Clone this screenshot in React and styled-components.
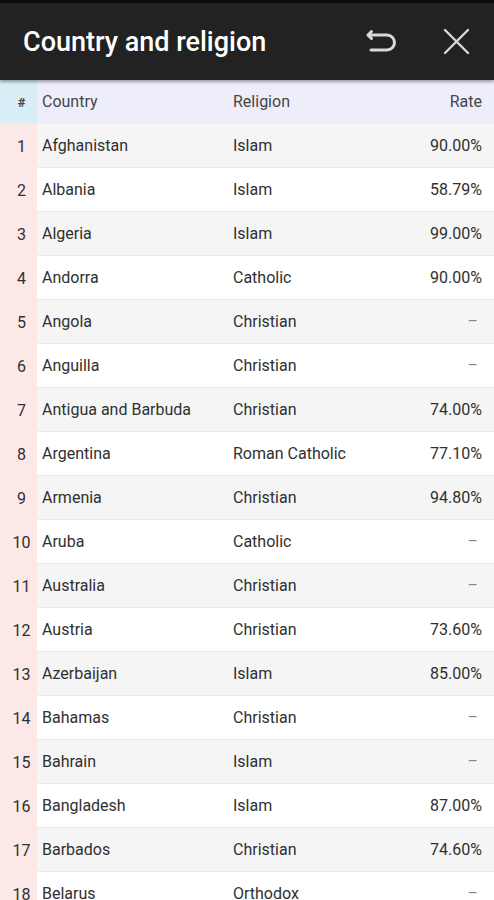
import React from "react";
import styled, { createGlobalStyle } from "styled-components";

const Global = createGlobalStyle`
  html, body { margin: 0; padding: 0; background: #ffffff; }
  body { font-family: Roboto, "Noto Sans", "Liberation Sans", sans-serif; overflow: hidden; }
  * { box-sizing: border-box; }
`;

const Page = styled.div`
  width: 494px;
  height: 900px;
  overflow: hidden;
  display: flex;
  flex-direction: column;
  background: #ffffff;
`;

const AppBar = styled.header`
  height: 80px;
  flex: none;
  background: #222222;
  border-top: 3px solid #0a0a0a;
  display: flex;
  align-items: center;
  padding: 0 14px 0 23px;
  box-shadow: 0 2px 3px rgba(0, 0, 0, 0.35);
  position: relative;
  z-index: 1;
`;

const Title = styled.h1`
  flex: 1;
  margin: 0;
  color: #ffffff;
  font-size: 27px;
  font-weight: 500;
  letter-spacing: 0;
  padding-bottom: 0;
`;

const IconButton = styled.button`
  width: ${(p) => p.$w}px;
  height: 48px;
  margin-left: ${(p) => p.$gap || 0}px;
  border: 0;
  background: transparent;
  padding: 0;
  display: flex;
  align-items: center;
  justify-content: center;
  color: #d9d9d9;
`;

const Table = styled.div`
  display: flex;
  flex-direction: column;
`;

const Row = styled.div`
  display: grid;
  grid-template-columns: 37px 191px 1fr 90px;
  height: 44px;
  align-items: stretch;
  background: ${(p) => (p.$head ? "#eeeefb" : p.$odd ? "#f5f5f5" : "#ffffff")};
  border-bottom: 1px solid ${(p) => (p.$head ? "#eeeefb" : "#e9e9e9")};
  color: ${(p) => (p.$head ? "#454545" : "#303030")};
  font-size: 16px;
`;

const Cell = styled.div`
  display: flex;
  align-items: center;
  justify-content: ${(p) => (p.$right ? "flex-end" : "flex-start")};
  padding: ${(p) => (p.$right ? "0 12px 0 0" : "0 0 0 5px")};
  white-space: nowrap;
`;

const NumCell = styled.div`
  display: flex;
  align-items: center;
  justify-content: center;
  background: ${(p) => (p.$head ? "#daeef7" : "#fde8e8")};
  font-size: ${(p) => (p.$head ? "13px" : "16px")};
  font-weight: ${(p) => (p.$head ? 700 : 400)};
  padding-left: 6px;
  margin-bottom: -1px;
`;

const Dash = styled.span`
  color: #8a8a8a;
  padding-right: 4px;
`;

const data = [
  ["Afghanistan", "Islam", "90.00%"],
  ["Albania", "Islam", "58.79%"],
  ["Algeria", "Islam", "99.00%"],
  ["Andorra", "Catholic", "90.00%"],
  ["Angola", "Christian", ""],
  ["Anguilla", "Christian", ""],
  ["Antigua and Barbuda", "Christian", "74.00%"],
  ["Argentina", "Roman Catholic", "77.10%"],
  ["Armenia", "Christian", "94.80%"],
  ["Aruba", "Catholic", ""],
  ["Australia", "Christian", ""],
  ["Austria", "Christian", "73.60%"],
  ["Azerbaijan", "Islam", "85.00%"],
  ["Bahamas", "Christian", ""],
  ["Bahrain", "Islam", ""],
  ["Bangladesh", "Islam", "87.00%"],
  ["Barbados", "Christian", "74.60%"],
  ["Belarus", "Orthodox", ""],
];

const UndoIcon = () => (
  <svg width="32" height="26" viewBox="0 0 32 26" fill="none" stroke="currentColor" strokeWidth="3" strokeLinecap="round" strokeLinejoin="round">
    <path d="M6.5 2.5 3 6l3.5 3.5" />
    <path d="M3.5 6H22a7.5 7.5 0 0 1 0 15H6" />
  </svg>
);

const CloseIcon = () => (
  <svg width="27" height="27" viewBox="0 0 27 27" fill="none" stroke="currentColor" strokeWidth="2.4" strokeLinecap="round">
    <path d="M2 2 25 25M25 2 2 25" />
  </svg>
);

export default function App() {
  return (
    <Page>
      <Global />
      <AppBar>
        <Title>Country and religion</Title>
        <IconButton $w={56} aria-label="undo"><UndoIcon /></IconButton>
        <IconButton $w={48} $gap={23} aria-label="close"><CloseIcon /></IconButton>
      </AppBar>
      <Table>
        <Row $head>
          <NumCell $head>#</NumCell>
          <Cell>Country</Cell>
          <Cell>Religion</Cell>
          <Cell $right>Rate</Cell>
        </Row>
        {data.map(([c, r, rate], i) => (
          <Row key={c} $odd={i % 2 === 0}>
            <NumCell>{i + 1}</NumCell>
            <Cell>{c}</Cell>
            <Cell>{r}</Cell>
            <Cell $right>{rate || <Dash>–</Dash>}</Cell>
          </Row>
        ))}
      </Table>
    </Page>
  );
}
